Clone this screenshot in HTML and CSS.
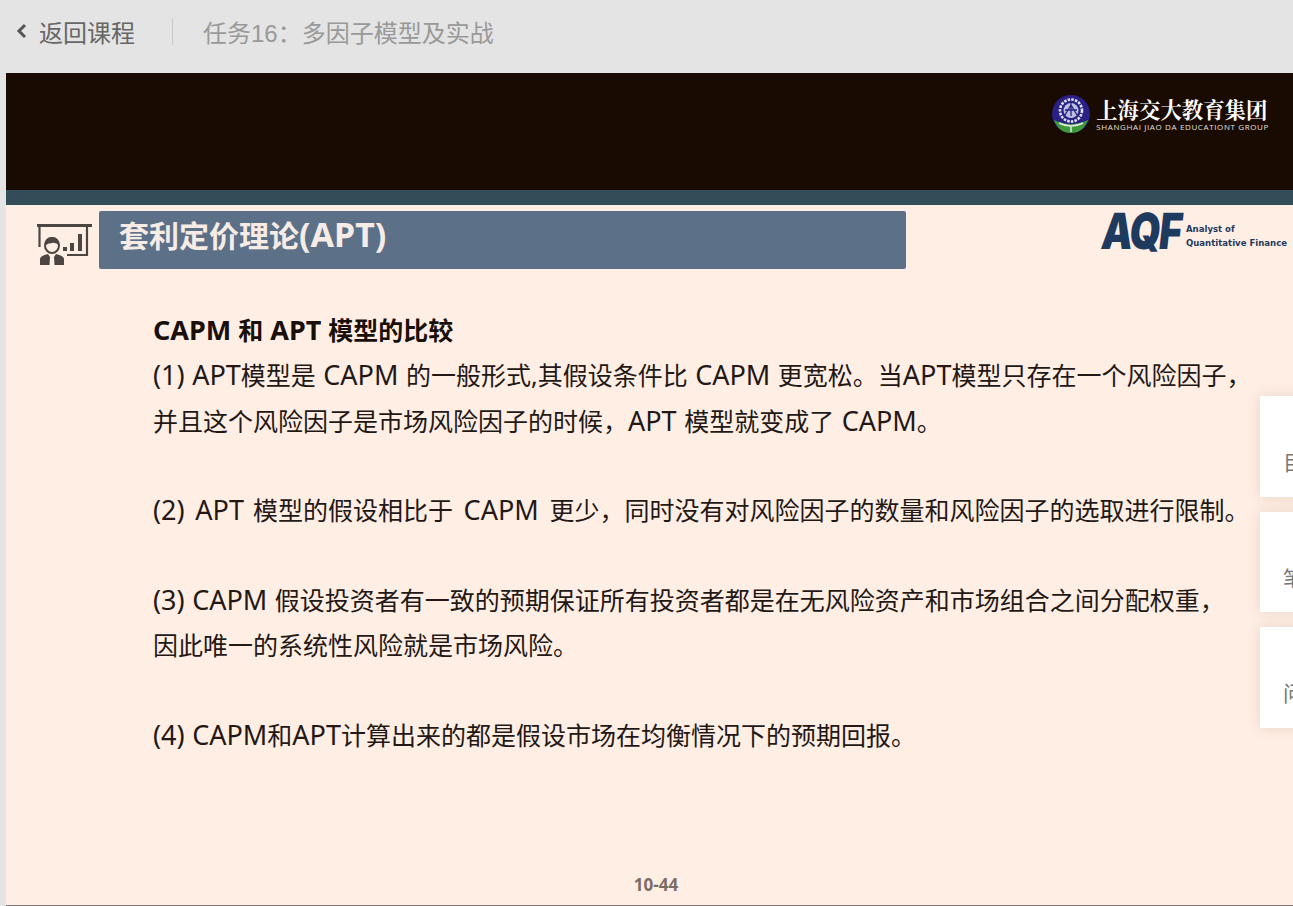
FILE: index.html
```html
<!DOCTYPE html>
<html lang="zh-CN">
<head>
    <meta charset="UTF-8">
    <title>任务16：多因子模型及实战</title>
    <link rel="stylesheet" href="styles.css">
</head>
<body>
    <header class="topbar">
        <a class="back-link">
            <svg class="back-icon" width="11" height="16" viewBox="0 0 11 16"><path d="M9 2 L3 8 L9 14" fill="none" stroke="#555" stroke-width="3"/></svg>
            返回课程
        </a>
        <span class="topbar-line"></span>
        <span class="task-title">任务16：多因子模型及实战</span>
    </header>

    <main class="slide">
        <div class="slide-top">
            <div class="sjtu-logo">
                <svg width="38" height="38" viewBox="0 0 38 38">
                    <circle cx="19" cy="19" r="19" fill="#2a2186"/>
                    <path d="M2 25 Q19 33 36 25 Q31 38 19 38 Q7 38 2 25Z" fill="#3f9a3c"/>
                    <circle cx="19" cy="15.5" r="11" fill="#2a2186" stroke="#dfe3f0" stroke-width="2.6" stroke-dasharray="2.5 1.2"/>
                    <circle cx="19" cy="15.5" r="7.5" fill="#b9c0de"/>
                    <path d="M13 20 L19 10 L25 20 M19 8 V21 M13 15 H25" fill="none" stroke="#2a2186" stroke-width="1.3"/>
                    <path d="M7 28 Q19 34 31 28 M19 31 V37" fill="none" stroke="#e8efe6" stroke-width="1.4"/>
                </svg>
                <div class="sjtu-text">
                    <div class="sjtu-cn">上海交大教育集团</div>
                    <div class="sjtu-en">SHANGHAI JIAO DA EDUCATIONT GROUP</div>
                </div>
            </div>
        </div>
        <div class="slide-strip"></div>

        <div class="slide-head">
            <svg class="teach-icon" width="56" height="42" viewBox="0 0 56 42">
                <path d="M0 1.5 H55" stroke="#4c4643" stroke-width="3"/>
                <path d="M2.5 2 V23 M50 2 V31 H30" fill="none" stroke="#4c4643" stroke-width="2.2"/>
                <rect x="26" y="23" width="4" height="4" fill="#4c4643"/>
                <rect x="33" y="19" width="4" height="8" fill="#4c4643"/>
                <rect x="41" y="10" width="4" height="17" fill="#4c4643"/>
                <ellipse cx="15" cy="21.5" rx="7" ry="7.5" fill="#ffeee4" stroke="#4c4643" stroke-width="2"/>
                <path d="M7.5 22 Q7.5 13 15 13 Q22.5 13 22.5 22 Q19 18 15 19 Q11 19 7.5 22Z" fill="#4c4643"/>
                <path d="M3 41 V35 Q3 32 11 30 L13 33 L12.5 41 H17.5 L17 33 L19 30 Q27 32 27 35 V41Z" fill="#4c4643"/>
            </svg>
            <h1 class="slide-title">套利定价理论<span class="title-en">(APT)</span></h1>
            <div class="aqf-logo">
                <span class="aqf-mark">AQF</span>
                <span class="aqf-text">Analyst of<br>Quantitative Finance</span>
            </div>
        </div>

        <div class="slide-body">
            <h2 class="body-head"><span class="en">CAPM</span> 和 <span class="en">APT</span> 模型的比较</h2>
            <p><span class="en">(1)</span> <span class="en">APT</span>模型是 <span class="en">CAPM</span> 的一般形式,其假设条件比 <span class="en">CAPM</span> 更宽松。当<span class="en">APT</span>模型只存在一个风险因子，<br>并且这个风险因子是市场风险因子的时候，<span class="en">APT</span> 模型就变成了 <span class="en">CAPM</span>。</p>
            <p class="tight"><span class="en">(2)</span> &thinsp;<span class="en">APT</span> &hairsp;模型的假设相比于 &thinsp;<span class="en">CAPM</span> &thinsp;更少，同时没有对风险因子的数量和风险因子的选取进行限制。</p>
            <p><span class="en">(3)</span> <span class="en">CAPM</span> 假设投资者有一致的预期保证所有投资者都是在无风险资产和市场组合之间分配权重，<br>因此唯一的系统性风险就是市场风险。</p>
            <p><span class="en">(4)</span> <span class="en">CAPM</span>和<span class="en">APT</span>计算出来的都是假设市场在均衡情况下的预期回报。</p>
        </div>

        <div class="page-no">10-44</div>
    </main>

    <aside class="side-tabs">
        <div class="side-tab">目录</div>
        <div class="side-tab">笔记</div>
        <div class="side-tab">问答</div>
    </aside>
</body>
</html>
```

FILE: styles.css
```css
html, body {
    margin: 0;
    padding: 0;
    height: 906px;
    overflow: hidden;
}
body {
    position: relative;
    background-color: #e4e4e4;
    font-family: "Liberation Sans", "Noto Sans CJK SC", sans-serif;
    color: #333;
}
.topbar {
    height: 73px;
    display: flex;
    align-items: center;
    padding-left: 16px;
    box-sizing: border-box;
    padding-bottom: 11px;
}
.back-link {
    display: flex;
    align-items: center;
    gap: 12px;
    font-size: 24px;
    color: #666;
}
.topbar-line {
    width: 1px;
    height: 27px;
    background-color: #c9c9c9;
    margin: 0 30px 0 37px;
}
.task-title {
    font-size: 24px;
    color: #999;
}
.slide {
    margin-left: 6px;
    height: 833px;
    display: flex;
    flex-direction: column;
    background-color: #ffeee4;
    border-bottom: 1px solid #7d7672;
    box-sizing: border-box;
}
.slide-top {
    height: 117px;
    background-color: #1a0b02;
    display: flex;
    justify-content: flex-end;
    padding: 22px 24px 0 0;
    box-sizing: border-box;
}
.sjtu-logo {
    display: flex;
    gap: 6px;
    height: 38px;
}
.sjtu-text {
    padding-top: 1px;
}
.sjtu-cn {
    font-family: "Liberation Serif", "Noto Serif CJK SC", "Noto Sans CJK SC", serif;
    font-size: 21.4px;
    font-weight: bold;
    line-height: 30px;
    color: #fff;
    white-space: nowrap;
}
.sjtu-en {
    margin-top: -4px;
    font-family: "Open Sans", sans-serif;
    font-size: 8px;
    line-height: 10px;
    letter-spacing: 0.62px;
    color: #e4e0dc;
    white-space: nowrap;
}
.slide-strip {
    height: 15px;
    background-color: #334d58;
}
.slide-head {
    display: flex;
    align-items: flex-start;
    padding: 6px 6px 0 31px;
    height: 59px;
    box-sizing: border-box;
}
.teach-icon {
    margin: 13px 6px 0 0;
    flex: none;
}
.slide-title {
    width: 807px;
    height: 58px;
    margin: 0;
    padding-left: 20px;
    box-sizing: border-box;
    background-color: #5c7088;
    border-radius: 2px;
    font-family: "Noto Sans", "Noto Sans CJK SC", sans-serif;
    font-size: 30px;
    line-height: 50px;
    color: #f6ece5;
    font-weight: bold;
}
.title-en {
    font-size: 34px;
    line-height: 1;
}
.aqf-logo {
    display: flex;
    align-items: center;
    margin-left: auto;
    color: #1f3a5f;
}
.aqf-mark {
    font-family: "Inter", sans-serif;
    font-size: 50px;
    line-height: 40px;
    font-weight: 900;
    letter-spacing: -2px;
    width: 84px;
    transform-origin: left center;
    transform: scaleX(0.79) skewX(-8deg);
}
.aqf-text {
    font-family: "DejaVu Sans Condensed", "DejaVu Sans", sans-serif;
    font-size: 9.5px;
    line-height: 14px;
    font-weight: bold;
    white-space: nowrap;
    padding-top: 9px;
}
.slide-body {
    padding: 48px 0 0 147px;
    font-family: "Noto Sans", "Noto Sans CJK SC", sans-serif;
    font-size: 25px;
    color: #231815;
}
.en {
    font-size: 27px;
    line-height: 1;
}
.body-head {
    margin: 0 0 5px;
    font-size: 25px;
    line-height: 36px;
    font-weight: bold;
    color: #1a0f0a;
    word-spacing: 0.5px;
}
.slide-body p {
    margin: 0 0 44px;
    line-height: 45.5px;
    white-space: nowrap;
    word-spacing: 1px;
}
.slide-body p.tight {
    word-spacing: 0;
}
.page-no {
    margin-top: auto;
    padding: 0 0 9px 13px;
    text-align: center;
    font-family: "Noto Sans", sans-serif;
    font-size: 17px;
    font-weight: bold;
    color: #7b6d66;
}
.side-tabs {
    position: absolute;
    left: 1260px;
    top: 396px;
    width: 80px;
    display: flex;
    flex-direction: column;
    gap: 15px;
}
.side-tab {
    height: 100.5px;
    padding: 52px 0 0 23px;
    box-sizing: border-box;
    background-color: #fff;
    box-shadow: 0 0 12px rgba(120, 90, 70, 0.18);
    font-size: 21px;
    line-height: 30px;
    color: #777;
    white-space: nowrap;
}
```
